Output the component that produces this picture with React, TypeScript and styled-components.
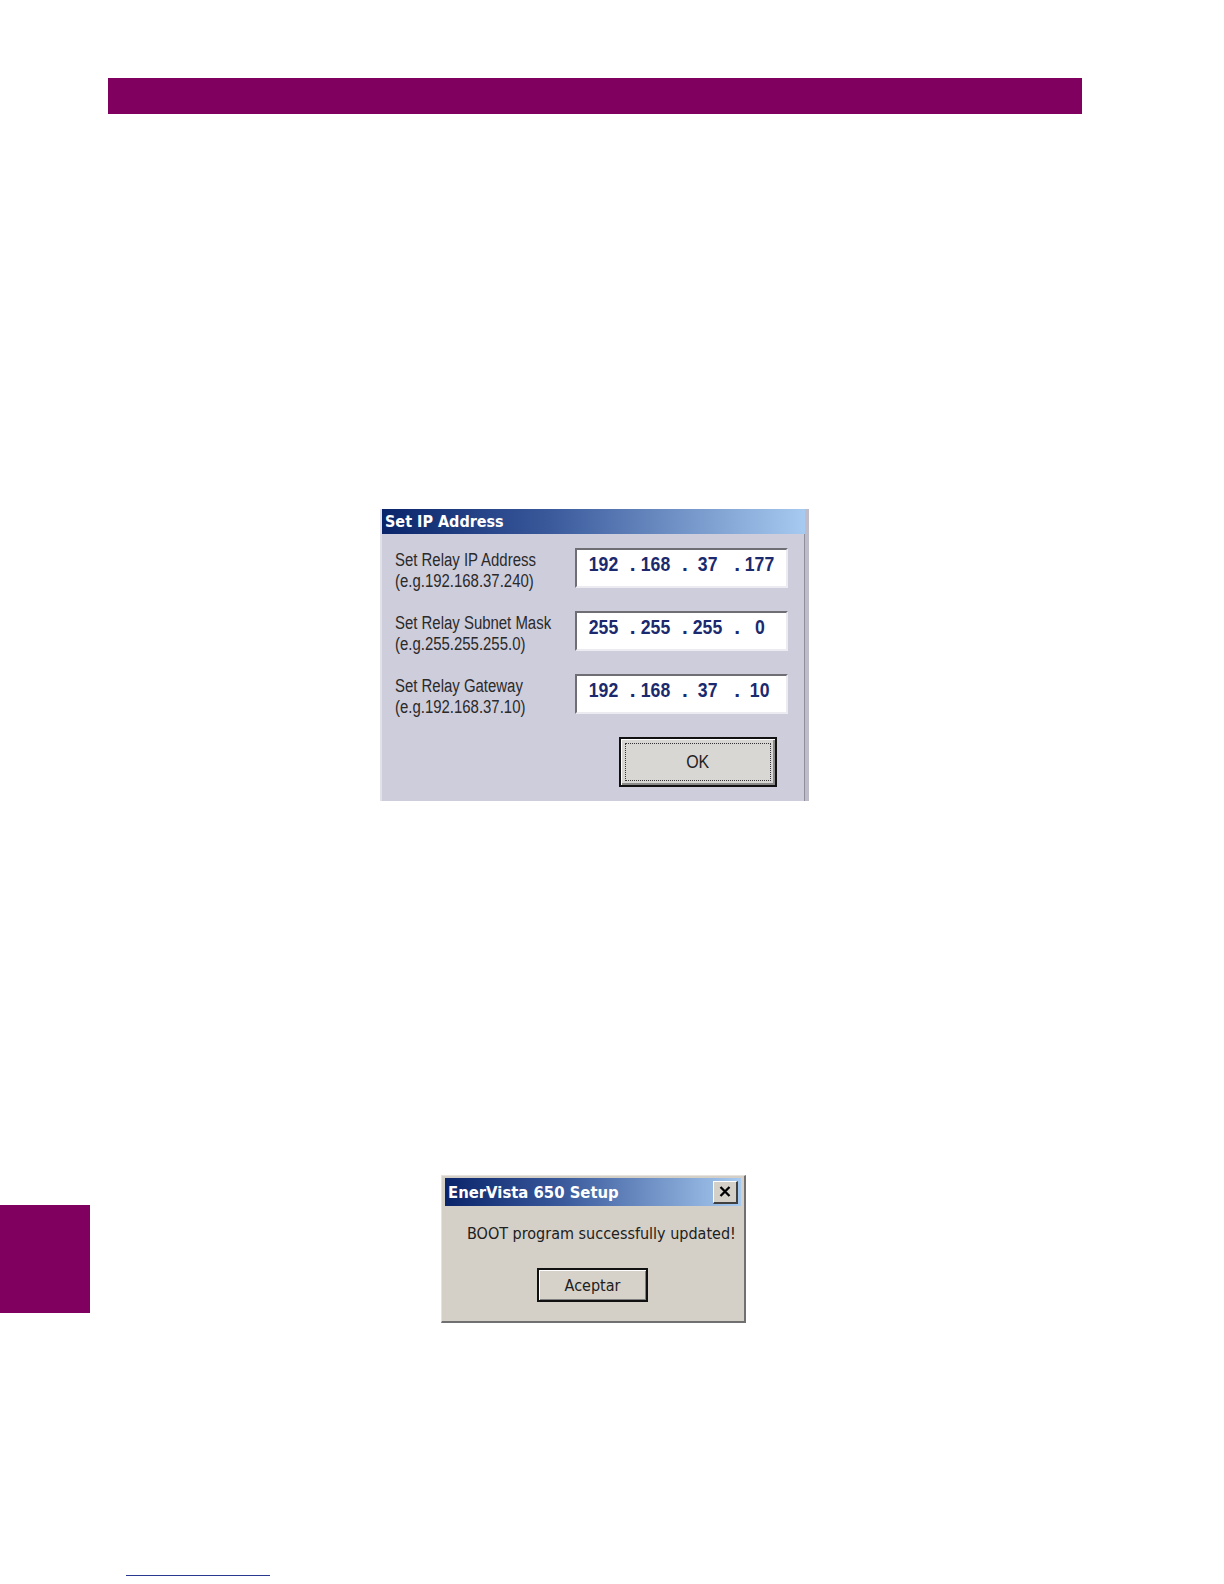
import styled, { createGlobalStyle } from 'styled-components'

const Global = createGlobalStyle`
  html, body {
    margin: 0;
    padding: 0;
    background: #ffffff;
  }
  body {
    width: 1224px;
    height: 1584px;
    overflow: hidden;
    font-family: 'Liberation Sans', Arial, sans-serif;
  }
`

const Page = styled.div`
  display: flex;
  flex-direction: column;
  align-items: flex-start;
  width: 1224px;
`

const HeaderBar = styled.div`
  margin: 78px 0 0 108px;
  width: 974px;
  height: 36px;
  background: #80005f;
`

const IpDialog = styled.div`
  margin: 395px 0 0 380px;
  width: 429px;
  height: 292px;
  box-sizing: border-box;
  display: flex;
  flex-direction: column;
  background: #cecddc;
  border-left: 2px solid #e2e1ea;
  border-right: 4px solid #bdbcc8;
  box-shadow: inset -1px 0 0 #8f8e9a;
  overflow: hidden;
`

const TitleBar = styled.div<{ $h: number }>`
  height: ${(p) => p.$h}px;
  flex: none;
  display: flex;
  align-items: center;
  justify-content: space-between;
  padding: 0 3px 0 3px;
  box-sizing: border-box;
  background: linear-gradient(90deg, #0a246a 0%, #3a5a9c 40%, #a6caf0 100%);
  color: #ffffff;
  font-family: 'DejaVu Sans Condensed', 'DejaVu Sans', sans-serif;
  font-weight: bold;
`

const TitleText = styled.span<{ $size: number }>`
  font-size: ${(p) => p.$size}px;
`

const IpBody = styled.div`
  display: flex;
  flex-direction: column;
  gap: 23px;
  padding: 14px 17px 0 13px;
`

const Row = styled.div`
  height: 40px;
  display: grid;
  grid-template-columns: minmax(0, 1fr) 213px;
  align-items: start;
`

const Label = styled.div`
  margin-top: 2px;
  font-family: 'Liberation Sans Narrow', 'Liberation Sans', sans-serif;
  font-size: 18px;
  line-height: 21px;
  color: #2a2a2a;
  white-space: nowrap;
  transform: scaleX(0.83);
  transform-origin: left top;
`

const IpBox = styled.div`
  width: 213px;
  height: 40px;
  box-sizing: border-box;
  background: #ffffff;
  border-top: 2px solid #6e6e74;
  border-left: 2px solid #6e6e74;
  border-right: 2px solid #ecebf2;
  border-bottom: 2px solid #ecebf2;
  display: grid;
  grid-template-columns: repeat(4, 52.2px);
  padding-top: 2px;
`

const Octet = styled.div`
  display: grid;
  grid-template-columns: 7px 1fr 7px;
  justify-items: center;
  font-family: 'Liberation Sans', sans-serif;
  font-weight: bold;
  font-size: 21px;
  line-height: 24px;
  color: #1b2a6e;
`

const Num = styled.span`
  display: inline-block;
  transform: scaleX(0.84);
`

const ButtonRow = styled.div<{ $pad: number }>`
  display: flex;
  justify-content: flex-end;
  padding-right: ${(p) => p.$pad}px;
`

const OkButton = styled.div`
  width: 158px;
  height: 50px;
  box-sizing: border-box;
  border: 2px solid #111111;
  background: #d9d7d3;
  box-shadow: inset 1px 1px 0 #ffffff, inset -2px -2px 0 #8a8a8a;
  padding: 4px;
  display: flex;
`

const FocusRect = styled.div`
  flex: 1;
  border: 1px dotted #333333;
  display: flex;
  align-items: center;
  justify-content: center;
  font-family: 'Liberation Sans', sans-serif;
  font-size: 19px;
  color: #222222;
`

const OkText = styled.span`
  display: inline-block;
  transform: scaleX(0.84);
`

const LowerRow = styled.div`
  display: flex;
  align-items: flex-start;
  margin-top: 374px;
`

const SideTab = styled.div`
  margin-top: 30px;
  width: 90px;
  height: 108px;
  background: #80005f;
`

const MsgDialog = styled.div`
  margin-left: 351px;
  width: 305px;
  height: 148px;
  box-sizing: border-box;
  background: #d4d0c8;
  padding: 2px 3px 3px 3px;
  border-left: 1px solid #e6e3de;
  border-top: 1px solid #e6e3de;
  border-right: 2px solid #707070;
  border-bottom: 2px solid #707070;
  display: flex;
  flex-direction: column;
`

const CloseBtn = styled.div`
  width: 25px;
  height: 23px;
  box-sizing: border-box;
  background: #d4d0c8;
  border-top: 1px solid #ffffff;
  border-left: 1px solid #ffffff;
  border-right: 2px solid #404040;
  border-bottom: 2px solid #404040;
  display: flex;
  align-items: center;
  justify-content: center;
`

const Message = styled.div`
  margin: 18px 0 0 22px;
  font-family: 'DejaVu Sans Condensed', 'DejaVu Sans', sans-serif;
  font-size: 16px;
  line-height: 20px;
  color: #202020;
  white-space: nowrap;
`

const AceptarButton = styled.div`
  margin: 24px 0 0 92px;
  width: 111px;
  height: 34px;
  box-sizing: border-box;
  border: 2px solid #111111;
  background: #d6d2ca;
  box-shadow: inset 1px 1px 0 #ffffff, inset -1px -1px 0 #808080;
  display: flex;
  align-items: center;
  justify-content: center;
  font-family: 'DejaVu Sans Condensed', 'DejaVu Sans', sans-serif;
  font-size: 16px;
  color: #202020;
`

const FooterLine = styled.div`
  margin: 252px 0 0 126px;
  width: 144px;
  height: 1px;
  background: #2a3990;
`

const rows = [
  { label: ['Set Relay IP Address', '(e.g.192.168.37.240)'], ip: ['192', '168', '37', '177'] },
  { label: ['Set Relay Subnet Mask', '(e.g.255.255.255.0)'], ip: ['255', '255', '255', '0'] },
  { label: ['Set Relay Gateway', '(e.g.192.168.37.10)'], ip: ['192', '168', '37', '10'] },
]

export default function App() {
  return (
    <Page>
      <Global />
      <HeaderBar />

      <IpDialog>
        <TitleBar $h={25}>
          <TitleText $size={16}>Set IP Address</TitleText>
        </TitleBar>
        <IpBody>
          {rows.map((r) => (
            <Row key={r.label[0]}>
              <Label>
                {r.label[0]}
                <br />
                {r.label[1]}
              </Label>
              <IpBox>
                {r.ip.map((o, i) => (
                  <Octet key={i}>
                    <span>{i > 0 ? '.' : ''}</span>
                    <Num>{o}</Num>
                    <span />
                  </Octet>
                ))}
              </IpBox>
            </Row>
          ))}
          <ButtonRow $pad={11}>
            <OkButton>
              <FocusRect>
                <OkText>OK</OkText>
              </FocusRect>
            </OkButton>
          </ButtonRow>
        </IpBody>
      </IpDialog>

      <LowerRow>
        <SideTab />
        <MsgDialog>
          <TitleBar $h={28}>
            <TitleText $size={16.5}>EnerVista 650 Setup</TitleText>
            <CloseBtn>
              <svg width="12" height="11" viewBox="0 0 12 11">
                <path d="M1.5 1 L10.5 10 M10.5 1 L1.5 10" stroke="#000" strokeWidth="2.3" />
              </svg>
            </CloseBtn>
          </TitleBar>
          <Message>BOOT program successfully updated!</Message>
          <AceptarButton>Aceptar</AceptarButton>
        </MsgDialog>
      </LowerRow>

      <FooterLine />
    </Page>
  )
}
